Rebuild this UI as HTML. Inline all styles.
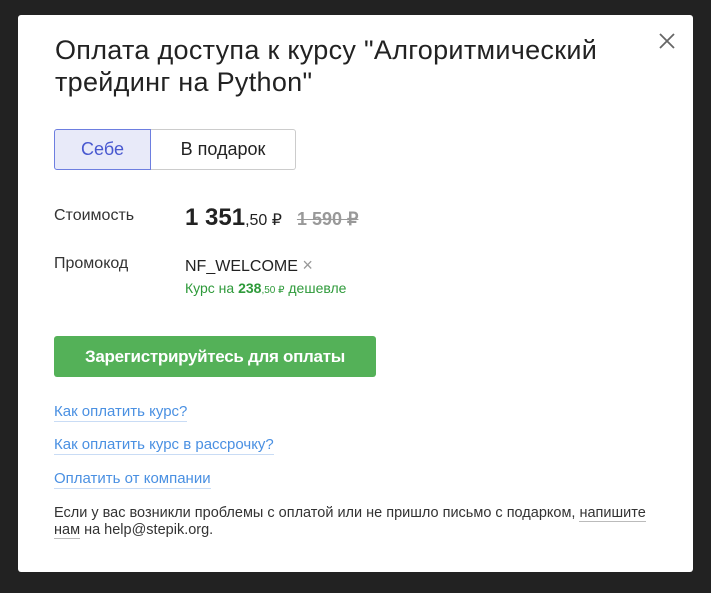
<!DOCTYPE html>
<html><head><meta charset="utf-8"><style>
*{margin:0;padding:0;box-sizing:border-box}
body{width:711px;height:593px;background:#222;font-family:"Liberation Sans",sans-serif;position:relative;overflow:hidden;color:#222}
.m{position:absolute;left:18px;top:15px;width:675px;height:557px;background:#fff;border-radius:3px}
.a{position:absolute;white-space:nowrap}
h1{position:absolute;left:37px;top:19px;font-size:27px;font-weight:normal;line-height:32px;letter-spacing:0.3px;color:#222}
.tg{position:absolute;left:36px;top:114px;height:41px;display:flex}
.tg div{height:41px;line-height:39px;font-size:18px;text-align:center}
.l{color:#4a90e2;font-size:15px;border-bottom:1px solid #c9dcf5;line-height:18px}
</style></head><body>
<div class="m">
<h1>Оплата доступа к курсу "Алгоритмический<br>трейдинг на Python"</h1>
<svg class="a" style="left:641px;top:18px" width="16" height="16" viewBox="0 0 16 16"><path d="M1 1L15 15M15 1L1 15" stroke="#666" stroke-width="1.8"/></svg>
<div class="tg"><div style="width:97px;background:#e8eaf9;border:1px solid #6d7ee0;border-radius:3px 0 0 3px;color:#4858d0">Себе</div><div style="width:145px;border:1px solid #ccc;border-left:none;border-radius:0 3px 3px 0;color:#222">В подарок</div></div>
<div class="a" style="left:36px;top:192px;font-size:16px;color:#333">Стоимость</div>
<div class="a" style="left:167px;top:189px;color:#222"><b style="font-size:24px">1 351</b><span style="font-size:16px">,50 ₽</span><span style="font-size:18px;color:#999;text-decoration:line-through;margin-left:15px;font-weight:bold">1 590 ₽</span></div>
<div class="a" style="left:36px;top:240px;font-size:16px;color:#333">Промокод</div>
<div class="a" style="left:167px;top:240px;font-size:16px;color:#222">NF_WELCOME <span style="color:#999;font-size:18px">×</span></div>
<div class="a" style="left:167px;top:265px;font-size:14px;color:#2e9a3a">Курс на <b>238</b><span style="font-size:10px">,50 ₽</span> дешевле</div>
<div class="a" style="left:36px;top:321px;width:322px;height:41px;background:#54b158;border-radius:3px;color:#fff;font-size:17px;font-weight:bold;text-align:center;line-height:41px;letter-spacing:-0.3px">Зарегистрируйтесь для оплаты</div>
<div class="a l" style="left:36px;top:388px">Как оплатить курс?</div>
<div class="a l" style="left:36px;top:421px">Как оплатить курс в рассрочку?</div>
<div class="a l" style="left:36px;top:455px">Оплатить от компании</div>
<div class="a" style="left:36px;top:490px;font-size:14.5px;line-height:17px;color:#333">Если у вас возникли проблемы с оплатой или не пришло письмо с подарком, <span style="border-bottom:1px solid #bbb">напишите</span><br><span style="border-bottom:1px solid #bbb">нам</span> на help@stepik.org.</div>
</div>
</body></html>
